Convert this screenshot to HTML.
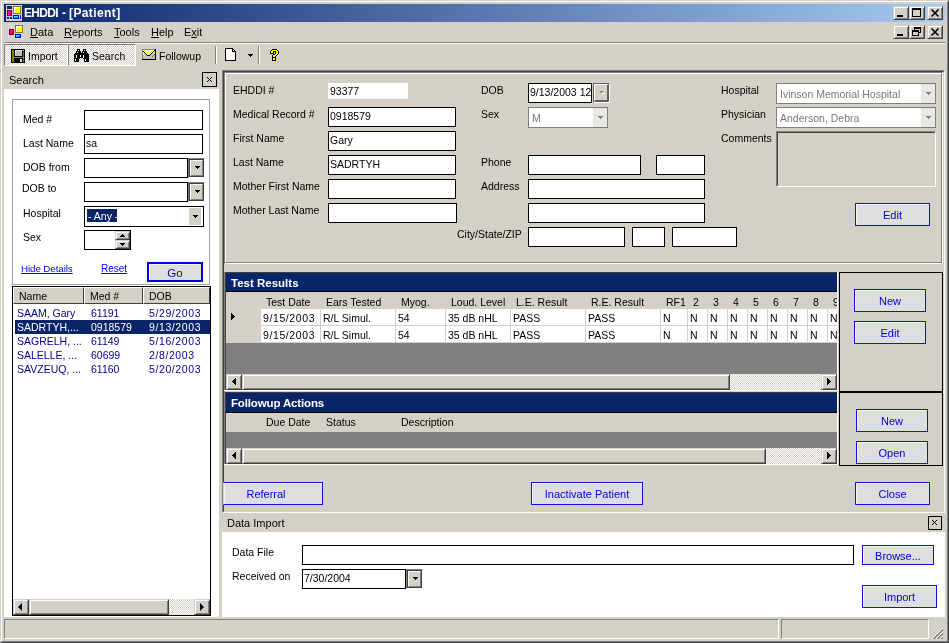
<!DOCTYPE html>
<html><head><meta charset="utf-8">
<style>
*{box-sizing:border-box;margin:0;padding:0}
html,body{width:949px;height:643px;overflow:hidden;background:#D4D0C8;font-family:"Liberation Sans",sans-serif;font-size:10.5px;color:#000}
.a{position:absolute}
.tb{position:absolute;background:#fff;border:1px solid #000}
.btn{position:absolute;padding-top:1px;background:#DEDEDE;border:1px solid #1010E0;box-shadow:inset 1px 1px 0 #F4F4F4;color:#0000D8;text-align:center;font-size:11px}
.lbl{position:absolute;height:12px;line-height:12px;white-space:nowrap}
.raised{border-style:solid;border-width:1px;border-color:#fff #404040 #404040 #fff;box-shadow:inset -1px -1px 0 #808080}
.sb{position:absolute;background:#D4D0C8;border:1px solid;border-color:#D4D0C8 #404040 #404040 #D4D0C8;box-shadow:inset 1px 1px 0 #fff,inset -1px -1px 0 #808080}
.dt{letter-spacing:.6px}
.dither{background-color:#fff;background-image:repeating-conic-gradient(#D4D0C8 0 25%,#fff 0 50%);background-size:2px 2px}
</style></head><body><div style="position:absolute;left:0;top:0;width:949px;height:643px;will-change:transform">
<!-- window frame -->
<div class="a" style="left:0;top:0;width:949px;height:643px;border:1px solid;border-color:#D4D0C8 #404040 #404040 #D4D0C8"></div>
<div class="a" style="left:1px;top:1px;width:947px;height:641px;border:1px solid;border-color:#fff #808080 #808080 #fff"></div>
<!-- title bar -->
<div class="a" style="left:4px;top:4px;width:941px;height:18px;background:linear-gradient(to right,#0A246A,#A6CAF0)"></div>
<div class="lbl" style="left:24px;top:5px;height:16px;line-height:16px;color:#fff;font-weight:bold;font-size:12px;letter-spacing:-0.7px">EHDDI</div><div class="lbl" style="left:62px;top:5px;height:16px;line-height:16px;color:#fff;font-weight:bold;font-size:12px">-</div><div class="lbl" style="left:69px;top:5px;height:16px;line-height:16px;color:#fff;font-weight:bold;font-size:12px;letter-spacing:0.4px">[Patient]</div>

<!-- title icon -->
<svg class="a" style="left:6px;top:5px" width="16" height="16" shape-rendering="crispEdges"><rect x="0" y="0" width="16" height="1" fill="#D0D0C8"/><rect x="0" y="1" width="1" height="1" fill="#D0D0C8"/><rect x="1" y="1" width="5" height="1" fill="#0A246A"/><rect x="6" y="1" width="1" height="1" fill="#D0D0C8"/><rect x="7" y="1" width="8" height="1" fill="#808000"/><rect x="15" y="1" width="1" height="1" fill="#D0D0C8"/><rect x="0" y="2" width="1" height="1" fill="#D0D0C8"/><rect x="1" y="2" width="5" height="1" fill="#0A246A"/><rect x="6" y="2" width="1" height="1" fill="#D0D0C8"/><rect x="7" y="2" width="1" height="1" fill="#808000"/><rect x="8" y="2" width="6" height="1" fill="#fff"/><rect x="14" y="2" width="1" height="1" fill="#808000"/><rect x="15" y="2" width="1" height="1" fill="#D0D0C8"/><rect x="0" y="3" width="1" height="1" fill="#D0D0C8"/><rect x="1" y="3" width="5" height="1" fill="#0A246A"/><rect x="6" y="3" width="1" height="1" fill="#D0D0C8"/><rect x="7" y="3" width="1" height="1" fill="#808000"/><rect x="8" y="3" width="1" height="1" fill="#fff"/><rect x="9" y="3" width="5" height="1" fill="#FFFF00"/><rect x="14" y="3" width="1" height="1" fill="#808000"/><rect x="15" y="3" width="1" height="1" fill="#D0D0C8"/><rect x="0" y="4" width="7" height="1" fill="#D0D0C8"/><rect x="7" y="4" width="1" height="1" fill="#808000"/><rect x="8" y="4" width="1" height="1" fill="#fff"/><rect x="9" y="4" width="5" height="1" fill="#FFFF00"/><rect x="14" y="4" width="1" height="1" fill="#808000"/><rect x="15" y="4" width="1" height="1" fill="#D0D0C8"/><rect x="0" y="5" width="1" height="1" fill="#D0D0C8"/><rect x="1" y="5" width="5" height="1" fill="#800000"/><rect x="6" y="5" width="1" height="1" fill="#D0D0C8"/><rect x="7" y="5" width="1" height="1" fill="#808000"/><rect x="8" y="5" width="1" height="1" fill="#fff"/><rect x="9" y="5" width="5" height="1" fill="#FFFF00"/><rect x="14" y="5" width="1" height="1" fill="#808000"/><rect x="15" y="5" width="1" height="1" fill="#D0D0C8"/><rect x="0" y="6" width="1" height="1" fill="#D0D0C8"/><rect x="1" y="6" width="1" height="1" fill="#800000"/><rect x="2" y="6" width="3" height="1" fill="#FF00FF"/><rect x="5" y="6" width="1" height="1" fill="#800000"/><rect x="6" y="6" width="1" height="1" fill="#D0D0C8"/><rect x="7" y="6" width="1" height="1" fill="#808000"/><rect x="8" y="6" width="1" height="1" fill="#fff"/><rect x="9" y="6" width="5" height="1" fill="#FFFF00"/><rect x="14" y="6" width="1" height="1" fill="#808000"/><rect x="15" y="6" width="1" height="1" fill="#D0D0C8"/><rect x="0" y="7" width="1" height="1" fill="#D0D0C8"/><rect x="1" y="7" width="1" height="1" fill="#800000"/><rect x="2" y="7" width="1" height="1" fill="#FF00FF"/><rect x="3" y="7" width="2" height="1" fill="#FF0000"/><rect x="5" y="7" width="1" height="1" fill="#800000"/><rect x="6" y="7" width="1" height="1" fill="#D0D0C8"/><rect x="7" y="7" width="1" height="1" fill="#808000"/><rect x="8" y="7" width="1" height="1" fill="#fff"/><rect x="9" y="7" width="5" height="1" fill="#FFFF00"/><rect x="14" y="7" width="1" height="1" fill="#808000"/><rect x="15" y="7" width="1" height="1" fill="#D0D0C8"/><rect x="0" y="8" width="1" height="1" fill="#D0D0C8"/><rect x="1" y="8" width="1" height="1" fill="#800000"/><rect x="2" y="8" width="1" height="1" fill="#FF00FF"/><rect x="3" y="8" width="2" height="1" fill="#FF0000"/><rect x="5" y="8" width="1" height="1" fill="#800000"/><rect x="6" y="8" width="1" height="1" fill="#D0D0C8"/><rect x="7" y="8" width="8" height="1" fill="#808000"/><rect x="15" y="8" width="1" height="1" fill="#D0D0C8"/><rect x="0" y="9" width="1" height="1" fill="#D0D0C8"/><rect x="1" y="9" width="1" height="1" fill="#800000"/><rect x="2" y="9" width="1" height="1" fill="#FF00FF"/><rect x="3" y="9" width="2" height="1" fill="#FF0000"/><rect x="5" y="9" width="1" height="1" fill="#800000"/><rect x="6" y="9" width="10" height="1" fill="#D0D0C8"/><rect x="0" y="10" width="1" height="1" fill="#D0D0C8"/><rect x="1" y="10" width="5" height="1" fill="#800000"/><rect x="6" y="10" width="1" height="1" fill="#D0D0C8"/><rect x="7" y="10" width="6" height="1" fill="#0000FF"/><rect x="13" y="10" width="1" height="1" fill="#D0D0C8"/><rect x="14" y="10" width="1" height="1" fill="#0A246A"/><rect x="15" y="10" width="1" height="1" fill="#D0D0C8"/><rect x="0" y="11" width="7" height="1" fill="#D0D0C8"/><rect x="7" y="11" width="1" height="1" fill="#0000FF"/><rect x="8" y="11" width="4" height="1" fill="#00FFFF"/><rect x="12" y="11" width="1" height="1" fill="#0000FF"/><rect x="13" y="11" width="1" height="1" fill="#D0D0C8"/><rect x="14" y="11" width="1" height="1" fill="#0A246A"/><rect x="15" y="11" width="1" height="1" fill="#D0D0C8"/><rect x="0" y="12" width="1" height="1" fill="#D0D0C8"/><rect x="1" y="12" width="2" height="1" fill="#0A246A"/><rect x="3" y="12" width="1" height="1" fill="#D0D0C8"/><rect x="4" y="12" width="2" height="1" fill="#0A246A"/><rect x="6" y="12" width="1" height="1" fill="#D0D0C8"/><rect x="7" y="12" width="1" height="1" fill="#0000FF"/><rect x="8" y="12" width="1" height="1" fill="#00FFFF"/><rect x="9" y="12" width="3" height="1" fill="#008080"/><rect x="12" y="12" width="1" height="1" fill="#0000FF"/><rect x="13" y="12" width="1" height="1" fill="#D0D0C8"/><rect x="14" y="12" width="1" height="1" fill="#0A246A"/><rect x="15" y="12" width="1" height="1" fill="#D0D0C8"/><rect x="0" y="13" width="1" height="1" fill="#D0D0C8"/><rect x="1" y="13" width="2" height="1" fill="#0A246A"/><rect x="3" y="13" width="1" height="1" fill="#D0D0C8"/><rect x="4" y="13" width="2" height="1" fill="#0A246A"/><rect x="6" y="13" width="1" height="1" fill="#D0D0C8"/><rect x="7" y="13" width="6" height="1" fill="#0000FF"/><rect x="13" y="13" width="1" height="1" fill="#D0D0C8"/><rect x="14" y="13" width="1" height="1" fill="#0A246A"/><rect x="15" y="13" width="1" height="1" fill="#D0D0C8"/><rect x="0" y="14" width="16" height="1" fill="#D0D0C8"/><rect x="0" y="15" width="16" height="1" fill="#D0D0C8"/></svg>
<!-- title buttons -->
<div class="sb" style="left:893px;top:6px;width:16px;height:14px"></div>
<div class="a" style="left:897px;top:15px;width:6px;height:2px;background:#000"></div>
<div class="sb" style="left:909px;top:6px;width:16px;height:14px"></div>
<div class="a" style="left:912px;top:8px;width:9px;height:9px;border:1px solid #000;border-top-width:2px"></div>
<div class="sb" style="left:927px;top:6px;width:16px;height:14px"></div>
<svg class="a" style="left:927px;top:6px" width="16" height="14"><path d="M4.5 3.5L11.5 10.5M11.5 3.5L4.5 10.5" stroke="#000" stroke-width="1.6"/></svg>

<!-- menu bar -->
<svg class="a" style="left:8px;top:24px" width="16" height="16" shape-rendering="crispEdges"><rect x="0" y="0" width="16" height="1" fill="#D8D6D0"/><rect x="0" y="1" width="1" height="1" fill="#D8D6D0"/><rect x="1" y="1" width="5" height="1" fill="#D8D6D0"/><rect x="6" y="1" width="1" height="1" fill="#D8D6D0"/><rect x="7" y="1" width="8" height="1" fill="#808000"/><rect x="15" y="1" width="1" height="1" fill="#D8D6D0"/><rect x="0" y="2" width="1" height="1" fill="#D8D6D0"/><rect x="1" y="2" width="5" height="1" fill="#D8D6D0"/><rect x="6" y="2" width="1" height="1" fill="#D8D6D0"/><rect x="7" y="2" width="1" height="1" fill="#808000"/><rect x="8" y="2" width="6" height="1" fill="#fff"/><rect x="14" y="2" width="1" height="1" fill="#808000"/><rect x="15" y="2" width="1" height="1" fill="#D8D6D0"/><rect x="0" y="3" width="1" height="1" fill="#D8D6D0"/><rect x="1" y="3" width="5" height="1" fill="#D8D6D0"/><rect x="6" y="3" width="1" height="1" fill="#D8D6D0"/><rect x="7" y="3" width="1" height="1" fill="#808000"/><rect x="8" y="3" width="1" height="1" fill="#fff"/><rect x="9" y="3" width="5" height="1" fill="#FFFF00"/><rect x="14" y="3" width="1" height="1" fill="#808000"/><rect x="15" y="3" width="1" height="1" fill="#D8D6D0"/><rect x="0" y="4" width="7" height="1" fill="#D8D6D0"/><rect x="7" y="4" width="1" height="1" fill="#808000"/><rect x="8" y="4" width="1" height="1" fill="#fff"/><rect x="9" y="4" width="5" height="1" fill="#FFFF00"/><rect x="14" y="4" width="1" height="1" fill="#808000"/><rect x="15" y="4" width="1" height="1" fill="#D8D6D0"/><rect x="0" y="5" width="1" height="1" fill="#D8D6D0"/><rect x="1" y="5" width="5" height="1" fill="#800000"/><rect x="6" y="5" width="1" height="1" fill="#D8D6D0"/><rect x="7" y="5" width="1" height="1" fill="#808000"/><rect x="8" y="5" width="1" height="1" fill="#fff"/><rect x="9" y="5" width="5" height="1" fill="#FFFF00"/><rect x="14" y="5" width="1" height="1" fill="#808000"/><rect x="15" y="5" width="1" height="1" fill="#D8D6D0"/><rect x="0" y="6" width="1" height="1" fill="#D8D6D0"/><rect x="1" y="6" width="1" height="1" fill="#800000"/><rect x="2" y="6" width="3" height="1" fill="#FF00FF"/><rect x="5" y="6" width="1" height="1" fill="#800000"/><rect x="6" y="6" width="1" height="1" fill="#D8D6D0"/><rect x="7" y="6" width="1" height="1" fill="#808000"/><rect x="8" y="6" width="1" height="1" fill="#fff"/><rect x="9" y="6" width="5" height="1" fill="#FFFF00"/><rect x="14" y="6" width="1" height="1" fill="#808000"/><rect x="15" y="6" width="1" height="1" fill="#D8D6D0"/><rect x="0" y="7" width="1" height="1" fill="#D8D6D0"/><rect x="1" y="7" width="1" height="1" fill="#800000"/><rect x="2" y="7" width="1" height="1" fill="#FF00FF"/><rect x="3" y="7" width="2" height="1" fill="#FF0000"/><rect x="5" y="7" width="1" height="1" fill="#800000"/><rect x="6" y="7" width="1" height="1" fill="#D8D6D0"/><rect x="7" y="7" width="1" height="1" fill="#808000"/><rect x="8" y="7" width="1" height="1" fill="#fff"/><rect x="9" y="7" width="5" height="1" fill="#FFFF00"/><rect x="14" y="7" width="1" height="1" fill="#808000"/><rect x="15" y="7" width="1" height="1" fill="#D8D6D0"/><rect x="0" y="8" width="1" height="1" fill="#D8D6D0"/><rect x="1" y="8" width="1" height="1" fill="#800000"/><rect x="2" y="8" width="1" height="1" fill="#FF00FF"/><rect x="3" y="8" width="2" height="1" fill="#FF0000"/><rect x="5" y="8" width="1" height="1" fill="#800000"/><rect x="6" y="8" width="1" height="1" fill="#D8D6D0"/><rect x="7" y="8" width="8" height="1" fill="#808000"/><rect x="15" y="8" width="1" height="1" fill="#D8D6D0"/><rect x="0" y="9" width="1" height="1" fill="#D8D6D0"/><rect x="1" y="9" width="1" height="1" fill="#800000"/><rect x="2" y="9" width="1" height="1" fill="#FF00FF"/><rect x="3" y="9" width="2" height="1" fill="#FF0000"/><rect x="5" y="9" width="1" height="1" fill="#800000"/><rect x="6" y="9" width="10" height="1" fill="#D8D6D0"/><rect x="0" y="10" width="1" height="1" fill="#D8D6D0"/><rect x="1" y="10" width="5" height="1" fill="#800000"/><rect x="6" y="10" width="1" height="1" fill="#D8D6D0"/><rect x="7" y="10" width="6" height="1" fill="#0000FF"/><rect x="13" y="10" width="1" height="1" fill="#D8D6D0"/><rect x="14" y="10" width="1" height="1" fill="#D8D6D0"/><rect x="15" y="10" width="1" height="1" fill="#D8D6D0"/><rect x="0" y="11" width="7" height="1" fill="#D8D6D0"/><rect x="7" y="11" width="1" height="1" fill="#0000FF"/><rect x="8" y="11" width="4" height="1" fill="#00FFFF"/><rect x="12" y="11" width="1" height="1" fill="#0000FF"/><rect x="13" y="11" width="1" height="1" fill="#D8D6D0"/><rect x="14" y="11" width="1" height="1" fill="#D8D6D0"/><rect x="15" y="11" width="1" height="1" fill="#D8D6D0"/><rect x="0" y="12" width="1" height="1" fill="#D8D6D0"/><rect x="1" y="12" width="2" height="1" fill="#D8D6D0"/><rect x="3" y="12" width="1" height="1" fill="#D8D6D0"/><rect x="4" y="12" width="2" height="1" fill="#D8D6D0"/><rect x="6" y="12" width="1" height="1" fill="#D8D6D0"/><rect x="7" y="12" width="1" height="1" fill="#0000FF"/><rect x="8" y="12" width="1" height="1" fill="#00FFFF"/><rect x="9" y="12" width="3" height="1" fill="#008080"/><rect x="12" y="12" width="1" height="1" fill="#0000FF"/><rect x="13" y="12" width="1" height="1" fill="#D8D6D0"/><rect x="14" y="12" width="1" height="1" fill="#D8D6D0"/><rect x="15" y="12" width="1" height="1" fill="#D8D6D0"/><rect x="0" y="13" width="1" height="1" fill="#D8D6D0"/><rect x="1" y="13" width="2" height="1" fill="#D8D6D0"/><rect x="3" y="13" width="1" height="1" fill="#D8D6D0"/><rect x="4" y="13" width="2" height="1" fill="#D8D6D0"/><rect x="6" y="13" width="1" height="1" fill="#D8D6D0"/><rect x="7" y="13" width="6" height="1" fill="#0000FF"/><rect x="13" y="13" width="1" height="1" fill="#D8D6D0"/><rect x="14" y="13" width="1" height="1" fill="#D8D6D0"/><rect x="15" y="13" width="1" height="1" fill="#D8D6D0"/><rect x="0" y="14" width="16" height="1" fill="#D8D6D0"/><rect x="0" y="15" width="16" height="1" fill="#D8D6D0"/></svg>
<div class="lbl" style="left:30px;top:26px;font-size:11px"><u>D</u>ata</div>
<div class="lbl" style="left:64px;top:26px;font-size:11px"><u>R</u>eports</div>
<div class="lbl" style="left:114px;top:26px;font-size:11px"><u>T</u>ools</div>
<div class="lbl" style="left:151px;top:26px;font-size:11px"><u>H</u>elp</div>
<div class="lbl" style="left:184px;top:26px;font-size:11px">E<u>x</u>it</div>
<div class="sb" style="left:893px;top:25px;width:16px;height:14px"></div>
<div class="a" style="left:897px;top:34px;width:6px;height:2px;background:#000"></div>
<div class="sb" style="left:909px;top:25px;width:16px;height:14px"></div>
<div class="a" style="left:914px;top:27px;width:7px;height:6px;border:1px solid #000;border-top-width:2px"></div>
<div class="a" style="left:912px;top:30px;width:7px;height:6px;border:1px solid #000;border-top-width:2px;background:#D4D0C8"></div>
<div class="sb" style="left:927px;top:25px;width:16px;height:14px"></div>
<svg class="a" style="left:927px;top:25px" width="16" height="14"><path d="M4.5 3.5L11.5 10.5M11.5 3.5L4.5 10.5" stroke="#000" stroke-width="1.6"/></svg>
<div class="a" style="left:4px;top:42px;width:941px;height:1px;background:#808080"></div>
<div class="a" style="left:4px;top:43px;width:941px;height:1px;background:#fff"></div>

<!-- toolbar -->
<div class="a dither" style="left:4px;top:44px;width:64px;height:22px;border:1px solid;border-color:#808080 #fff #fff #808080"></div>
<div class="a dither" style="left:68px;top:44px;width:68px;height:22px;border:1px solid;border-color:#808080 #fff #fff #808080"></div>
<svg class="a" style="left:11px;top:49px" width="14" height="14" shape-rendering="crispEdges"><rect x="0" y="0" width="14" height="1" fill="#000"/><rect x="0" y="1" width="1" height="1" fill="#000"/><rect x="1" y="1" width="2" height="1" fill="#808000"/><rect x="3" y="1" width="1" height="1" fill="#000"/><rect x="4" y="1" width="7" height="1" fill="#E0E0E0"/><rect x="11" y="1" width="1" height="1" fill="#000"/><rect x="12" y="1" width="1" height="1" fill="#fff"/><rect x="13" y="1" width="1" height="1" fill="#000"/><rect x="0" y="2" width="1" height="1" fill="#000"/><rect x="1" y="2" width="2" height="1" fill="#808000"/><rect x="3" y="2" width="1" height="1" fill="#000"/><rect x="4" y="2" width="1" height="1" fill="#E0E0E0"/><rect x="5" y="2" width="6" height="1" fill="#C0C0C0"/><rect x="11" y="2" width="3" height="1" fill="#000"/><rect x="0" y="3" width="1" height="1" fill="#000"/><rect x="1" y="3" width="2" height="1" fill="#808000"/><rect x="3" y="3" width="1" height="1" fill="#000"/><rect x="4" y="3" width="1" height="1" fill="#E0E0E0"/><rect x="5" y="3" width="6" height="1" fill="#C0C0C0"/><rect x="11" y="3" width="1" height="1" fill="#000"/><rect x="12" y="3" width="1" height="1" fill="#808000"/><rect x="13" y="3" width="1" height="1" fill="#000"/><rect x="0" y="4" width="1" height="1" fill="#000"/><rect x="1" y="4" width="2" height="1" fill="#808000"/><rect x="3" y="4" width="1" height="1" fill="#000"/><rect x="4" y="4" width="1" height="1" fill="#E0E0E0"/><rect x="5" y="4" width="6" height="1" fill="#C0C0C0"/><rect x="11" y="4" width="1" height="1" fill="#000"/><rect x="12" y="4" width="1" height="1" fill="#808000"/><rect x="13" y="4" width="1" height="1" fill="#000"/><rect x="0" y="5" width="1" height="1" fill="#000"/><rect x="1" y="5" width="2" height="1" fill="#808000"/><rect x="3" y="5" width="1" height="1" fill="#000"/><rect x="4" y="5" width="1" height="1" fill="#E0E0E0"/><rect x="5" y="5" width="6" height="1" fill="#C0C0C0"/><rect x="11" y="5" width="1" height="1" fill="#000"/><rect x="12" y="5" width="1" height="1" fill="#808000"/><rect x="13" y="5" width="1" height="1" fill="#000"/><rect x="0" y="6" width="1" height="1" fill="#000"/><rect x="1" y="6" width="2" height="1" fill="#808000"/><rect x="3" y="6" width="1" height="1" fill="#000"/><rect x="4" y="6" width="7" height="1" fill="#C0C0C0"/><rect x="11" y="6" width="1" height="1" fill="#000"/><rect x="12" y="6" width="1" height="1" fill="#808000"/><rect x="13" y="6" width="1" height="1" fill="#000"/><rect x="0" y="7" width="1" height="1" fill="#000"/><rect x="1" y="7" width="2" height="1" fill="#808000"/><rect x="3" y="7" width="9" height="1" fill="#000"/><rect x="12" y="7" width="1" height="1" fill="#808000"/><rect x="13" y="7" width="1" height="1" fill="#000"/><rect x="0" y="8" width="1" height="1" fill="#000"/><rect x="1" y="8" width="12" height="1" fill="#808000"/><rect x="13" y="8" width="1" height="1" fill="#000"/><rect x="0" y="9" width="1" height="1" fill="#000"/><rect x="1" y="9" width="2" height="1" fill="#808000"/><rect x="3" y="9" width="9" height="1" fill="#000"/><rect x="12" y="9" width="1" height="1" fill="#808000"/><rect x="13" y="9" width="1" height="1" fill="#000"/><rect x="0" y="10" width="1" height="1" fill="#000"/><rect x="1" y="10" width="2" height="1" fill="#808000"/><rect x="3" y="10" width="6" height="1" fill="#000"/><rect x="9" y="10" width="2" height="1" fill="#E0E0E0"/><rect x="11" y="10" width="1" height="1" fill="#000"/><rect x="12" y="10" width="1" height="1" fill="#808000"/><rect x="13" y="10" width="1" height="1" fill="#000"/><rect x="0" y="11" width="1" height="1" fill="#000"/><rect x="1" y="11" width="2" height="1" fill="#808000"/><rect x="3" y="11" width="6" height="1" fill="#000"/><rect x="9" y="11" width="2" height="1" fill="#E0E0E0"/><rect x="11" y="11" width="1" height="1" fill="#000"/><rect x="12" y="11" width="1" height="1" fill="#808000"/><rect x="13" y="11" width="1" height="1" fill="#000"/><rect x="0" y="12" width="1" height="1" fill="#000"/><rect x="1" y="12" width="2" height="1" fill="#808000"/><rect x="3" y="12" width="6" height="1" fill="#000"/><rect x="9" y="12" width="2" height="1" fill="#E0E0E0"/><rect x="11" y="12" width="1" height="1" fill="#000"/><rect x="12" y="12" width="1" height="1" fill="#808000"/><rect x="13" y="12" width="1" height="1" fill="#000"/><rect x="0" y="13" width="14" height="1" fill="#000"/></svg>
<div class="lbl" style="left:28px;top:50px">Import</div>
<svg class="a" style="left:74px;top:49px" width="15" height="13" shape-rendering="crispEdges"><rect x="3" y="0" width="3" height="1" fill="#000"/><rect x="9" y="0" width="3" height="1" fill="#000"/><rect x="3" y="1" width="1" height="1" fill="#000"/><rect x="4" y="1" width="1" height="1" fill="#fff"/><rect x="5" y="1" width="1" height="1" fill="#000"/><rect x="9" y="1" width="1" height="1" fill="#000"/><rect x="10" y="1" width="1" height="1" fill="#fff"/><rect x="11" y="1" width="1" height="1" fill="#000"/><rect x="2" y="2" width="5" height="1" fill="#000"/><rect x="8" y="2" width="5" height="1" fill="#000"/><rect x="2" y="3" width="1" height="1" fill="#000"/><rect x="3" y="3" width="1" height="1" fill="#fff"/><rect x="4" y="3" width="3" height="1" fill="#000"/><rect x="8" y="3" width="1" height="1" fill="#000"/><rect x="9" y="3" width="1" height="1" fill="#fff"/><rect x="10" y="3" width="3" height="1" fill="#000"/><rect x="1" y="4" width="13" height="1" fill="#000"/><rect x="0" y="5" width="15" height="1" fill="#000"/><rect x="0" y="6" width="2" height="1" fill="#000"/><rect x="2" y="6" width="1" height="1" fill="#fff"/><rect x="3" y="6" width="3" height="1" fill="#000"/><rect x="6" y="6" width="1" height="1" fill="#fff"/><rect x="7" y="6" width="2" height="1" fill="#000"/><rect x="9" y="6" width="1" height="1" fill="#fff"/><rect x="10" y="6" width="5" height="1" fill="#000"/><rect x="0" y="7" width="2" height="1" fill="#000"/><rect x="2" y="7" width="1" height="1" fill="#fff"/><rect x="3" y="7" width="3" height="1" fill="#000"/><rect x="6" y="7" width="1" height="1" fill="#fff"/><rect x="7" y="7" width="2" height="1" fill="#000"/><rect x="9" y="7" width="1" height="1" fill="#fff"/><rect x="10" y="7" width="5" height="1" fill="#000"/><rect x="0" y="8" width="2" height="1" fill="#000"/><rect x="2" y="8" width="1" height="1" fill="#fff"/><rect x="3" y="8" width="6" height="1" fill="#000"/><rect x="9" y="8" width="1" height="1" fill="#fff"/><rect x="10" y="8" width="5" height="1" fill="#000"/><rect x="0" y="9" width="6" height="1" fill="#000"/><rect x="9" y="9" width="6" height="1" fill="#000"/><rect x="0" y="10" width="1" height="1" fill="#000"/><rect x="1" y="10" width="1" height="1" fill="#fff"/><rect x="2" y="10" width="3" height="1" fill="#000"/><rect x="10" y="10" width="1" height="1" fill="#000"/><rect x="11" y="10" width="1" height="1" fill="#fff"/><rect x="12" y="10" width="3" height="1" fill="#000"/><rect x="0" y="11" width="1" height="1" fill="#000"/><rect x="1" y="11" width="1" height="1" fill="#fff"/><rect x="2" y="11" width="3" height="1" fill="#000"/><rect x="10" y="11" width="1" height="1" fill="#000"/><rect x="11" y="11" width="1" height="1" fill="#fff"/><rect x="12" y="11" width="3" height="1" fill="#000"/><rect x="0" y="12" width="5" height="1" fill="#000"/><rect x="10" y="12" width="5" height="1" fill="#000"/></svg>
<div class="lbl" style="left:92px;top:50px">Search</div>
<svg class="a" style="left:142px;top:49px" width="14" height="11" shape-rendering="crispEdges"><rect x="0" y="0" width="13" height="1" fill="#808080"/><rect x="13" y="0" width="1" height="1" fill="#000"/><rect x="0" y="1" width="1" height="1" fill="#808080"/><rect x="1" y="1" width="1" height="1" fill="#fff"/><rect x="2" y="1" width="1" height="1" fill="#FFFF00"/><rect x="3" y="1" width="2" height="1" fill="#fff"/><rect x="5" y="1" width="1" height="1" fill="#FFFF00"/><rect x="6" y="1" width="1" height="1" fill="#fff"/><rect x="7" y="1" width="1" height="1" fill="#FFFF00"/><rect x="8" y="1" width="2" height="1" fill="#fff"/><rect x="10" y="1" width="1" height="1" fill="#FFFF00"/><rect x="11" y="1" width="1" height="1" fill="#fff"/><rect x="12" y="1" width="2" height="1" fill="#000"/><rect x="0" y="2" width="1" height="1" fill="#808080"/><rect x="1" y="2" width="1" height="1" fill="#000"/><rect x="2" y="2" width="1" height="1" fill="#fff"/><rect x="3" y="2" width="1" height="1" fill="#FFFF00"/><rect x="4" y="2" width="2" height="1" fill="#fff"/><rect x="6" y="2" width="1" height="1" fill="#FFFF00"/><rect x="7" y="2" width="2" height="1" fill="#fff"/><rect x="9" y="2" width="1" height="1" fill="#FFFF00"/><rect x="10" y="2" width="1" height="1" fill="#fff"/><rect x="11" y="2" width="1" height="1" fill="#000"/><rect x="12" y="2" width="1" height="1" fill="#FFFF00"/><rect x="13" y="2" width="1" height="1" fill="#000"/><rect x="0" y="3" width="1" height="1" fill="#808080"/><rect x="1" y="3" width="1" height="1" fill="#FFFF00"/><rect x="2" y="3" width="1" height="1" fill="#000"/><rect x="3" y="3" width="1" height="1" fill="#fff"/><rect x="4" y="3" width="1" height="1" fill="#FFFF00"/><rect x="5" y="3" width="1" height="1" fill="#fff"/><rect x="6" y="3" width="1" height="1" fill="#FFFF00"/><rect x="7" y="3" width="1" height="1" fill="#fff"/><rect x="8" y="3" width="1" height="1" fill="#FFFF00"/><rect x="9" y="3" width="1" height="1" fill="#fff"/><rect x="10" y="3" width="1" height="1" fill="#000"/><rect x="11" y="3" width="1" height="1" fill="#fff"/><rect x="12" y="3" width="1" height="1" fill="#C0C0C0"/><rect x="13" y="3" width="1" height="1" fill="#000"/><rect x="0" y="4" width="1" height="1" fill="#808080"/><rect x="1" y="4" width="1" height="1" fill="#fff"/><rect x="2" y="4" width="1" height="1" fill="#FFFF00"/><rect x="3" y="4" width="1" height="1" fill="#000"/><rect x="4" y="4" width="1" height="1" fill="#fff"/><rect x="5" y="4" width="1" height="1" fill="#FFFF00"/><rect x="6" y="4" width="1" height="1" fill="#fff"/><rect x="7" y="4" width="1" height="1" fill="#FFFF00"/><rect x="8" y="4" width="1" height="1" fill="#fff"/><rect x="9" y="4" width="1" height="1" fill="#000"/><rect x="10" y="4" width="1" height="1" fill="#FFFF00"/><rect x="11" y="4" width="2" height="1" fill="#C0C0C0"/><rect x="13" y="4" width="1" height="1" fill="#000"/><rect x="0" y="5" width="1" height="1" fill="#808080"/><rect x="1" y="5" width="1" height="1" fill="#FFFF00"/><rect x="2" y="5" width="2" height="1" fill="#C0C0C0"/><rect x="4" y="5" width="1" height="1" fill="#000"/><rect x="5" y="5" width="1" height="1" fill="#FFFF00"/><rect x="6" y="5" width="1" height="1" fill="#fff"/><rect x="7" y="5" width="1" height="1" fill="#FFFF00"/><rect x="8" y="5" width="1" height="1" fill="#000"/><rect x="9" y="5" width="3" height="1" fill="#C0C0C0"/><rect x="12" y="5" width="1" height="1" fill="#808000"/><rect x="13" y="5" width="1" height="1" fill="#000"/><rect x="0" y="6" width="1" height="1" fill="#808080"/><rect x="1" y="6" width="1" height="1" fill="#C0C0C0"/><rect x="2" y="6" width="1" height="1" fill="#FFFF00"/><rect x="3" y="6" width="2" height="1" fill="#C0C0C0"/><rect x="5" y="6" width="3" height="1" fill="#000"/><rect x="8" y="6" width="3" height="1" fill="#C0C0C0"/><rect x="11" y="6" width="1" height="1" fill="#808000"/><rect x="12" y="6" width="1" height="1" fill="#C0C0C0"/><rect x="13" y="6" width="1" height="1" fill="#000"/><rect x="0" y="7" width="1" height="1" fill="#808080"/><rect x="1" y="7" width="2" height="1" fill="#C0C0C0"/><rect x="3" y="7" width="1" height="1" fill="#FFFF00"/><rect x="4" y="7" width="6" height="1" fill="#C0C0C0"/><rect x="10" y="7" width="1" height="1" fill="#808000"/><rect x="11" y="7" width="2" height="1" fill="#C0C0C0"/><rect x="13" y="7" width="1" height="1" fill="#000"/><rect x="0" y="8" width="1" height="1" fill="#808080"/><rect x="1" y="8" width="12" height="1" fill="#C0C0C0"/><rect x="13" y="8" width="1" height="1" fill="#000"/><rect x="0" y="9" width="1" height="1" fill="#808080"/><rect x="1" y="9" width="12" height="1" fill="#C0C0C0"/><rect x="13" y="9" width="1" height="1" fill="#000"/><rect x="0" y="10" width="14" height="1" fill="#000"/></svg>
<div class="lbl" style="left:159px;top:50px">Followup</div>
<div class="a" style="left:215px;top:46px;width:1px;height:18px;background:#808080"></div>
<div class="a" style="left:216px;top:46px;width:1px;height:18px;background:#fff"></div>
<svg class="a" style="left:225px;top:48px" width="12" height="13" shape-rendering="crispEdges"><rect x="0" y="0" width="8" height="1" fill="#000"/><rect x="0" y="1" width="1" height="1" fill="#000"/><rect x="1" y="1" width="6" height="1" fill="#fff"/><rect x="7" y="1" width="2" height="1" fill="#000"/><rect x="0" y="2" width="1" height="1" fill="#000"/><rect x="1" y="2" width="6" height="1" fill="#fff"/><rect x="7" y="2" width="1" height="1" fill="#000"/><rect x="8" y="2" width="1" height="1" fill="#fff"/><rect x="9" y="2" width="1" height="1" fill="#000"/><rect x="0" y="3" width="1" height="1" fill="#000"/><rect x="1" y="3" width="6" height="1" fill="#fff"/><rect x="7" y="3" width="4" height="1" fill="#000"/><rect x="0" y="4" width="1" height="1" fill="#000"/><rect x="1" y="4" width="9" height="1" fill="#fff"/><rect x="10" y="4" width="1" height="1" fill="#000"/><rect x="0" y="5" width="1" height="1" fill="#000"/><rect x="1" y="5" width="9" height="1" fill="#fff"/><rect x="10" y="5" width="1" height="1" fill="#000"/><rect x="0" y="6" width="1" height="1" fill="#000"/><rect x="1" y="6" width="9" height="1" fill="#fff"/><rect x="10" y="6" width="1" height="1" fill="#000"/><rect x="0" y="7" width="1" height="1" fill="#000"/><rect x="1" y="7" width="9" height="1" fill="#fff"/><rect x="10" y="7" width="1" height="1" fill="#000"/><rect x="0" y="8" width="1" height="1" fill="#000"/><rect x="1" y="8" width="9" height="1" fill="#fff"/><rect x="10" y="8" width="1" height="1" fill="#000"/><rect x="0" y="9" width="1" height="1" fill="#000"/><rect x="1" y="9" width="9" height="1" fill="#fff"/><rect x="10" y="9" width="1" height="1" fill="#000"/><rect x="0" y="10" width="1" height="1" fill="#000"/><rect x="1" y="10" width="9" height="1" fill="#fff"/><rect x="10" y="10" width="1" height="1" fill="#000"/><rect x="0" y="11" width="1" height="1" fill="#000"/><rect x="1" y="11" width="9" height="1" fill="#fff"/><rect x="10" y="11" width="1" height="1" fill="#000"/><rect x="0" y="12" width="11" height="1" fill="#000"/></svg>
<svg class="a" style="left:248px;top:54px" width="5" height="3" shape-rendering="crispEdges"><rect x="0" y="0" width="5" height="1"/><rect x="1" y="1" width="3" height="1"/><rect x="2" y="2" width="1" height="1"/></svg>
<div class="a" style="left:258px;top:46px;width:1px;height:18px;background:#808080"></div>
<div class="a" style="left:259px;top:46px;width:1px;height:18px;background:#fff"></div>
<svg class="a" style="left:269px;top:49px" width="11" height="12" shape-rendering="crispEdges"><rect x="3" y="0" width="5" height="1" fill="#000"/><rect x="2" y="1" width="1" height="1" fill="#000"/><rect x="3" y="1" width="5" height="1" fill="#FFFF00"/><rect x="8" y="1" width="1" height="1" fill="#000"/><rect x="1" y="2" width="1" height="1" fill="#000"/><rect x="2" y="2" width="2" height="1" fill="#FFFF00"/><rect x="4" y="2" width="3" height="1" fill="#000"/><rect x="7" y="2" width="2" height="1" fill="#FFFF00"/><rect x="9" y="2" width="1" height="1" fill="#000"/><rect x="1" y="3" width="1" height="1" fill="#000"/><rect x="2" y="3" width="2" height="1" fill="#FFFF00"/><rect x="4" y="3" width="1" height="1" fill="#000"/><rect x="6" y="3" width="1" height="1" fill="#000"/><rect x="7" y="3" width="2" height="1" fill="#FFFF00"/><rect x="9" y="3" width="1" height="1" fill="#000"/><rect x="1" y="4" width="4" height="1" fill="#000"/><rect x="6" y="4" width="1" height="1" fill="#000"/><rect x="7" y="4" width="2" height="1" fill="#FFFF00"/><rect x="9" y="4" width="1" height="1" fill="#000"/><rect x="4" y="5" width="2" height="1" fill="#000"/><rect x="6" y="5" width="2" height="1" fill="#FFFF00"/><rect x="8" y="5" width="1" height="1" fill="#000"/><rect x="3" y="6" width="1" height="1" fill="#000"/><rect x="4" y="6" width="3" height="1" fill="#FFFF00"/><rect x="7" y="6" width="1" height="1" fill="#000"/><rect x="3" y="7" width="1" height="1" fill="#000"/><rect x="4" y="7" width="2" height="1" fill="#FFFF00"/><rect x="6" y="7" width="1" height="1" fill="#000"/><rect x="3" y="8" width="4" height="1" fill="#000"/><rect x="3" y="9" width="1" height="1" fill="#000"/><rect x="4" y="9" width="2" height="1" fill="#FFFF00"/><rect x="6" y="9" width="1" height="1" fill="#000"/><rect x="3" y="10" width="1" height="1" fill="#000"/><rect x="4" y="10" width="2" height="1" fill="#FFFF00"/><rect x="6" y="10" width="1" height="1" fill="#000"/><rect x="3" y="11" width="4" height="1" fill="#000"/></svg>

<!-- search panel -->
<div class="lbl" style="left:9px;top:74px;font-size:11px">Search</div>
<div class="a" style="left:202px;top:72px;width:15px;height:15px;border:1px solid #000"></div>
<svg class="a" style="left:202px;top:72px" width="15" height="15" shape-rendering="crispEdges"><path d="M5 5h1v1h1v1h1v-1h1v-1h1v1h-1v1h-1v1h1v1h1v1h-1v-1h-1v-1h-1v1h-1v1h-1v-1h1v-1h1v-1h-1v-1h-1z" fill="#000"/></svg>
<div class="a" style="left:4px;top:89px;width:215px;height:528px;background:#fff"></div>
<div class="a" style="left:12px;top:99px;width:198px;height:186px;border:1px solid #A0A0A0"></div>
<div class="lbl" style="left:23px;top:113px">Med #</div>
<div class="tb" style="left:84px;top:110px;width:119px;height:20px"></div>
<div class="lbl" style="left:23px;top:137px">Last Name</div>
<div class="tb" style="left:84px;top:134px;width:119px;height:20px"><div class="lbl" style="left:1px;top:2px">sa</div></div>
<div class="lbl" style="left:23px;top:161px">DOB from</div>
<div class="tb" style="left:84px;top:158px;width:104px;height:20px"></div>
<div class="a" style="left:188px;top:158px;width:17px;height:20px;border:1px solid;border-color:#808080 #fff #fff #808080;background:#D4D0C8"><div class="a" style="left:0;top:0;width:15px;height:18px;border:1px solid #404040"><div class="a" style="left:0;top:0;width:13px;height:16px;border:1px solid;border-color:#fff #808080 #808080 #fff"></div></div><svg class="a" style="left:6px;top:7px" width="5" height="3" shape-rendering="crispEdges"><rect x="0" y="0" width="5" height="1"/><rect x="1" y="1" width="3" height="1"/><rect x="2" y="2" width="1" height="1"/></svg></div>
<div class="lbl" style="left:22px;top:182px">DOB to</div>
<div class="tb" style="left:84px;top:182px;width:104px;height:20px"></div>
<div class="a" style="left:188px;top:182px;width:17px;height:20px;border:1px solid;border-color:#808080 #fff #fff #808080;background:#D4D0C8"><div class="a" style="left:0;top:0;width:15px;height:18px;border:1px solid #404040"><div class="a" style="left:0;top:0;width:13px;height:16px;border:1px solid;border-color:#fff #808080 #808080 #fff"></div></div><svg class="a" style="left:6px;top:7px" width="5" height="3" shape-rendering="crispEdges"><rect x="0" y="0" width="5" height="1"/><rect x="1" y="1" width="3" height="1"/><rect x="2" y="2" width="1" height="1"/></svg></div>
<div class="lbl" style="left:23px;top:207px">Hospital</div>
<div class="tb" style="left:84px;top:206px;width:120px;height:21px"><div class="a" style="left:2px;top:2px;width:30px;height:13px;background:#0A246A"></div><div class="lbl" style="left:3px;top:3px;color:#fff">- Any -</div>
<div class="a" style="left:104px;top:1px;width:12px;height:17px;background:#D4D0C8"></div><svg class="a" style="left:108px;top:8px" width="5" height="3" shape-rendering="crispEdges"><rect x="0" y="0" width="5" height="1"/><rect x="1" y="1" width="3" height="1"/><rect x="2" y="2" width="1" height="1"/></svg></div>
<div class="lbl" style="left:23px;top:231px">Sex</div>
<div class="tb" style="left:84px;top:230px;width:47px;height:20px"></div>
<div class="sb" style="left:115px;top:231px;width:15px;height:9px"></div>
<svg class="a" style="left:120px;top:234px" width="5" height="3" shape-rendering="crispEdges"><rect x="2" y="0" width="1" height="1"/><rect x="1" y="1" width="3" height="1"/><rect x="0" y="2" width="5" height="1"/></svg>
<div class="sb" style="left:115px;top:240px;width:15px;height:9px"></div>
<svg class="a" style="left:120px;top:243px" width="5" height="3" shape-rendering="crispEdges"><rect x="0" y="0" width="5" height="1"/><rect x="1" y="1" width="3" height="1"/><rect x="2" y="2" width="1" height="1"/></svg>
<div class="lbl" style="left:21px;top:263px;color:#0000FF;text-decoration:underline;font-size:9.8px;letter-spacing:-.1px">Hide Details</div>
<div class="lbl" style="left:101px;top:263px;color:#0000FF;text-decoration:underline;font-size:10px">Reset</div>
<div class="btn" style="left:147px;top:262px;width:56px;height:20px;border:2px solid #0000E0;line-height:16px;font-size:11.5px;color:#0000B8">Go</div>

<!-- list -->
<div class="a" style="left:12px;top:286px;width:199px;height:330px;border:1px solid #000;background:#fff"></div>
<div class="a" style="left:13px;top:287px;width:71px;height:17px;background:#D4D0C8;border:1px solid;border-color:#fff #404040 #404040 #fff"><div class="lbl" style="left:5px;top:2px">Name</div></div>
<div class="a" style="left:84px;top:287px;width:59px;height:17px;background:#D4D0C8;border:1px solid;border-color:#fff #404040 #404040 #fff"><div class="lbl" style="left:5px;top:2px">Med #</div></div>
<div class="a" style="left:143px;top:287px;width:67px;height:17px;background:#D4D0C8;border:1px solid;border-color:#fff #404040 #404040 #fff"><div class="lbl" style="left:5px;top:2px">DOB</div></div>
<div class="a" style="left:15px;top:320px;width:195px;height:14px;background:#0A246A"></div>
<div class="lbl" style="left:17px;top:307px;color:#000090">SAAM, Gary</div>
<div class="lbl" style="left:91px;top:307px;color:#000090">61191</div>
<div class="lbl" style="left:149px;top:307px;color:#000090"><span class="dt">5/29/2003</span></div>
<div class="lbl" style="left:17px;top:321px;color:#fff">SADRTYH,...</div>
<div class="lbl" style="left:91px;top:321px;color:#fff">0918579</div>
<div class="lbl" style="left:149px;top:321px;color:#fff"><span class="dt">9/13/2003</span></div>
<div class="lbl" style="left:17px;top:335px;color:#000090">SAGRELH, ...</div>
<div class="lbl" style="left:91px;top:335px;color:#000090">61149</div>
<div class="lbl" style="left:149px;top:335px;color:#000090"><span class="dt">5/16/2003</span></div>
<div class="lbl" style="left:17px;top:349px;color:#000090">SALELLE, ...</div>
<div class="lbl" style="left:91px;top:349px;color:#000090">60699</div>
<div class="lbl" style="left:149px;top:349px;color:#000090"><span class="dt">2/8/2003</span></div>
<div class="lbl" style="left:17px;top:363px;color:#000090">SAVZEUQ, ...</div>
<div class="lbl" style="left:91px;top:363px;color:#000090">61160</div>
<div class="lbl" style="left:149px;top:363px;color:#000090"><span class="dt">5/20/2003</span></div>
<!-- list hscroll -->
<div class="a" style="left:13px;top:599px;width:197px;height:16px;background:#D4D0C8"></div>
<div class="sb" style="left:13px;top:599px;width:16px;height:16px"></div>
<svg class="a" style="left:18px;top:603px" width="5" height="8"><path d="M4 0V8L0 4Z" fill="#000"/></svg>
<div class="sb" style="left:29px;top:599px;width:140px;height:16px"></div>
<div class="a dither" style="left:169px;top:599px;width:25px;height:16px"></div>
<div class="sb" style="left:194px;top:599px;width:16px;height:16px"></div>
<svg class="a" style="left:200px;top:603px" width="5" height="8"><path d="M0 0V8L4 4Z" fill="#000"/></svg>

<!-- status bar -->
<div class="a" style="left:4px;top:619px;width:775px;height:20px;border:1px solid;border-color:#808080 #fff #fff #808080"></div>
<div class="a" style="left:781px;top:619px;width:148px;height:20px;border:1px solid;border-color:#808080 #fff #fff #808080"></div>
<svg class="a" style="left:931px;top:627px" width="13" height="13"><path d="M12 1L1 12M12 5L5 12M12 9L9 12" stroke="#fff" stroke-width="1"/><path d="M12 2L2 12M12 3L3 12M12 6L6 12M12 7L7 12M12 10L10 12M12 11L11 12" stroke="#808080" stroke-width="1"/></svg>

<!-- MDI client frame -->
<div class="a" style="left:222px;top:70px;width:723px;height:443px;border:1px solid;border-color:#808080 #fff #fff #808080"></div>
<div class="a" style="left:223px;top:71px;width:721px;height:441px;border:1px solid;border-color:#404040 #D4D0C8 #D4D0C8 #404040"></div>
<!-- top form panel -->
<div class="a" style="left:224px;top:72px;width:719px;height:192px;border:1px solid;border-color:#808080 #fff #fff #808080"></div>
<div class="a" style="left:225px;top:73px;width:717px;height:190px;border:1px solid;border-color:#fff #808080 #808080 #fff"></div>
<div class="lbl" style="left:233px;top:84px">EHDDI #</div>
<div class="a" style="left:328px;top:83px;width:80px;height:16px;background:#fff"><div class="lbl" style="left:2px;top:2px">93377</div></div>
<div class="lbl" style="left:233px;top:108px">Medical Record #</div>
<div class="tb" style="left:328px;top:107px;width:128px;height:20px"><div class="lbl" style="left:1px;top:2px">0918579</div></div>
<div class="lbl" style="left:233px;top:132px">First Name</div>
<div class="tb" style="left:328px;top:131px;width:128px;height:20px"><div class="lbl" style="left:1px;top:2px">Gary</div></div>
<div class="lbl" style="left:233px;top:156px">Last Name</div>
<div class="tb" style="left:328px;top:155px;width:128px;height:20px"><div class="lbl" style="left:1px;top:2px">SADRTYH</div></div>
<div class="lbl" style="left:233px;top:180px">Mother First Name</div>
<div class="tb" style="left:328px;top:179px;width:128px;height:20px"></div>
<div class="lbl" style="left:233px;top:204px">Mother Last Name</div>
<div class="tb" style="left:328px;top:203px;width:129px;height:20px"></div>

<div class="lbl" style="left:481px;top:84px">DOB</div>
<div class="tb" style="left:528px;top:83px;width:64px;height:20px;overflow:hidden"><div class="lbl" style="left:1px;top:2px">9/13/2003 12:00</div></div>
<div class="a" style="left:593px;top:83px;width:17px;height:20px;border:1px solid;border-color:#606060 #fff #fff #606060;background:#D4D0C8"><div class="a" style="left:0;top:0;width:15px;height:18px;border-style:solid;border-width:1px 2px 2px 1px;border-color:#fff #606060 #606060 #fff"></div><svg class="a" style="left:5px;top:7px" width="8" height="5"><path d="M1 1H6L3.5 3.5Z" fill="#fff"/><path d="M0 0H5L2.5 2.5Z" fill="#808080"/></svg></div>
<div class="lbl" style="left:481px;top:108px">Sex</div>
<div class="a" style="left:528px;top:107px;width:80px;height:21px;border:1px solid #808080;background:#fff"><div class="lbl" style="left:3px;top:4px;color:#787878">M</div><div class="a" style="left:64px;top:0;width:14px;height:19px;background:#E9E7E3"></div><svg class="a" style="left:69px;top:8px" width="5" height="3" shape-rendering="crispEdges"><rect x="0" y="0" width="5" height="1" fill="#808080"/><rect x="1" y="1" width="3" height="1" fill="#808080"/><rect x="2" y="2" width="1" height="1" fill="#808080"/></svg></div>
<div class="lbl" style="left:481px;top:156px">Phone</div>
<div class="tb" style="left:528px;top:155px;width:113px;height:20px"></div>
<div class="tb" style="left:656px;top:155px;width:49px;height:20px"></div>
<div class="lbl" style="left:481px;top:180px">Address</div>
<div class="tb" style="left:528px;top:179px;width:177px;height:20px"></div>
<div class="tb" style="left:528px;top:203px;width:177px;height:20px"></div>
<div class="lbl" style="left:457px;top:228px">City/State/ZIP</div>
<div class="tb" style="left:528px;top:227px;width:97px;height:20px"></div>
<div class="tb" style="left:632px;top:227px;width:33px;height:20px"></div>
<div class="tb" style="left:672px;top:227px;width:65px;height:20px"></div>

<div class="lbl" style="left:721px;top:84px">Hospital</div>
<div class="a" style="left:776px;top:83px;width:160px;height:21px;border:1px solid #808080;background:#fff"><div class="lbl" style="left:3px;top:4px;color:#787878">Ivinson Memorial Hospital</div><div class="a" style="left:144px;top:0;width:14px;height:19px;background:#E9E7E3"></div><svg class="a" style="left:149px;top:8px" width="5" height="3" shape-rendering="crispEdges"><rect x="0" y="0" width="5" height="1" fill="#808080"/><rect x="1" y="1" width="3" height="1" fill="#808080"/><rect x="2" y="2" width="1" height="1" fill="#808080"/></svg></div>
<div class="lbl" style="left:721px;top:108px">Physician</div>
<div class="a" style="left:776px;top:107px;width:160px;height:21px;border:1px solid #808080;background:#fff"><div class="lbl" style="left:3px;top:4px;color:#787878">Anderson, Debra</div><div class="a" style="left:144px;top:0;width:14px;height:19px;background:#E9E7E3"></div><svg class="a" style="left:149px;top:8px" width="5" height="3" shape-rendering="crispEdges"><rect x="0" y="0" width="5" height="1" fill="#808080"/><rect x="1" y="1" width="3" height="1" fill="#808080"/><rect x="2" y="2" width="1" height="1" fill="#808080"/></svg></div>
<div class="lbl" style="left:721px;top:132px">Comments</div>
<div class="a" style="left:776px;top:131px;width:160px;height:56px;border:1px solid;border-color:#808080 #fff #fff #808080"><div class="a" style="left:0;top:0;width:158px;height:54px;border:1px solid;border-color:#404040 #D4D0C8 #D4D0C8 #404040"></div></div>
<div class="btn" style="left:855px;top:203px;width:75px;height:23px;line-height:21px">Edit</div>

<!-- test results panel -->
<div class="a" style="left:224px;top:272px;width:1px;height:120px;background:#808080"></div>
<div class="a" style="left:225px;top:272px;width:1px;height:118px;background:#404040"></div>
<div class="a" style="left:225px;top:272px;width:612px;height:1px;background:#404040"></div>
<div class="a" style="left:837px;top:272px;width:1px;height:119px;background:#fff"></div>
<div class="a" style="left:224px;top:390px;width:614px;height:1px;background:#fff"></div>
<div class="a" style="left:226px;top:273px;width:611px;height:117px;overflow:hidden;background:#D4D0C8">
<div class="a" style="left:0;top:0;width:611px;height:19px;background:#0A246A;border-bottom:1px solid #000"><div class="lbl" style="left:5px;top:4px;color:#fff;font-weight:bold;font-size:11.5px">Test Results</div></div>
<div class="lbl" style="left:40px;top:23px">Test Date</div><div class="lbl" style="left:100px;top:23px">Ears Tested</div><div class="lbl" style="left:175px;top:23px">Myog.</div><div class="lbl" style="left:225px;top:23px">Loud. Level</div><div class="lbl" style="left:290px;top:23px">L.E. Result</div><div class="lbl" style="left:365px;top:23px">R.E. Result</div><div class="lbl" style="left:440px;top:23px">RF1</div><div class="lbl" style="left:467px;top:23px">2</div><div class="lbl" style="left:487px;top:23px">3</div><div class="lbl" style="left:507px;top:23px">4</div><div class="lbl" style="left:527px;top:23px">5</div><div class="lbl" style="left:547px;top:23px">6</div><div class="lbl" style="left:567px;top:23px">7</div><div class="lbl" style="left:587px;top:23px">8</div><div class="lbl" style="left:607px;top:23px">9</div>
<div class="a" style="left:35px;top:36px;width:60px;height:17px;background:#fff;border-right:1px solid #D4D0C8;border-bottom:1px solid #D4D0C8"><div class="lbl" style="left:2px;top:3px"><span class="dt">9/15/2003</span></div></div><div class="a" style="left:35px;top:53px;width:60px;height:17px;background:#fff;border-right:1px solid #D4D0C8;border-bottom:1px solid #D4D0C8"><div class="lbl" style="left:2px;top:3px"><span class="dt">9/15/2003</span></div></div><div class="a" style="left:95px;top:36px;width:75px;height:17px;background:#fff;border-right:1px solid #D4D0C8;border-bottom:1px solid #D4D0C8"><div class="lbl" style="left:2px;top:3px">R/L Simul.</div></div><div class="a" style="left:95px;top:53px;width:75px;height:17px;background:#fff;border-right:1px solid #D4D0C8;border-bottom:1px solid #D4D0C8"><div class="lbl" style="left:2px;top:3px">R/L Simul.</div></div><div class="a" style="left:170px;top:36px;width:50px;height:17px;background:#fff;border-right:1px solid #D4D0C8;border-bottom:1px solid #D4D0C8"><div class="lbl" style="left:2px;top:3px">54</div></div><div class="a" style="left:170px;top:53px;width:50px;height:17px;background:#fff;border-right:1px solid #D4D0C8;border-bottom:1px solid #D4D0C8"><div class="lbl" style="left:2px;top:3px">54</div></div><div class="a" style="left:220px;top:36px;width:65px;height:17px;background:#fff;border-right:1px solid #D4D0C8;border-bottom:1px solid #D4D0C8"><div class="lbl" style="left:2px;top:3px">35 dB nHL</div></div><div class="a" style="left:220px;top:53px;width:65px;height:17px;background:#fff;border-right:1px solid #D4D0C8;border-bottom:1px solid #D4D0C8"><div class="lbl" style="left:2px;top:3px">35 dB nHL</div></div><div class="a" style="left:285px;top:36px;width:75px;height:17px;background:#fff;border-right:1px solid #D4D0C8;border-bottom:1px solid #D4D0C8"><div class="lbl" style="left:2px;top:3px">PASS</div></div><div class="a" style="left:285px;top:53px;width:75px;height:17px;background:#fff;border-right:1px solid #D4D0C8;border-bottom:1px solid #D4D0C8"><div class="lbl" style="left:2px;top:3px">PASS</div></div><div class="a" style="left:360px;top:36px;width:75px;height:17px;background:#fff;border-right:1px solid #D4D0C8;border-bottom:1px solid #D4D0C8"><div class="lbl" style="left:2px;top:3px">PASS</div></div><div class="a" style="left:360px;top:53px;width:75px;height:17px;background:#fff;border-right:1px solid #D4D0C8;border-bottom:1px solid #D4D0C8"><div class="lbl" style="left:2px;top:3px">PASS</div></div><div class="a" style="left:435px;top:36px;width:27px;height:17px;background:#fff;border-right:1px solid #D4D0C8;border-bottom:1px solid #D4D0C8"><div class="lbl" style="left:2px;top:3px">N</div></div><div class="a" style="left:435px;top:53px;width:27px;height:17px;background:#fff;border-right:1px solid #D4D0C8;border-bottom:1px solid #D4D0C8"><div class="lbl" style="left:2px;top:3px">N</div></div><div class="a" style="left:462px;top:36px;width:20px;height:17px;background:#fff;border-right:1px solid #D4D0C8;border-bottom:1px solid #D4D0C8"><div class="lbl" style="left:2px;top:3px">N</div></div><div class="a" style="left:462px;top:53px;width:20px;height:17px;background:#fff;border-right:1px solid #D4D0C8;border-bottom:1px solid #D4D0C8"><div class="lbl" style="left:2px;top:3px">N</div></div><div class="a" style="left:482px;top:36px;width:20px;height:17px;background:#fff;border-right:1px solid #D4D0C8;border-bottom:1px solid #D4D0C8"><div class="lbl" style="left:2px;top:3px">N</div></div><div class="a" style="left:482px;top:53px;width:20px;height:17px;background:#fff;border-right:1px solid #D4D0C8;border-bottom:1px solid #D4D0C8"><div class="lbl" style="left:2px;top:3px">N</div></div><div class="a" style="left:502px;top:36px;width:20px;height:17px;background:#fff;border-right:1px solid #D4D0C8;border-bottom:1px solid #D4D0C8"><div class="lbl" style="left:2px;top:3px">N</div></div><div class="a" style="left:502px;top:53px;width:20px;height:17px;background:#fff;border-right:1px solid #D4D0C8;border-bottom:1px solid #D4D0C8"><div class="lbl" style="left:2px;top:3px">N</div></div><div class="a" style="left:522px;top:36px;width:20px;height:17px;background:#fff;border-right:1px solid #D4D0C8;border-bottom:1px solid #D4D0C8"><div class="lbl" style="left:2px;top:3px">N</div></div><div class="a" style="left:522px;top:53px;width:20px;height:17px;background:#fff;border-right:1px solid #D4D0C8;border-bottom:1px solid #D4D0C8"><div class="lbl" style="left:2px;top:3px">N</div></div><div class="a" style="left:542px;top:36px;width:20px;height:17px;background:#fff;border-right:1px solid #D4D0C8;border-bottom:1px solid #D4D0C8"><div class="lbl" style="left:2px;top:3px">N</div></div><div class="a" style="left:542px;top:53px;width:20px;height:17px;background:#fff;border-right:1px solid #D4D0C8;border-bottom:1px solid #D4D0C8"><div class="lbl" style="left:2px;top:3px">N</div></div><div class="a" style="left:562px;top:36px;width:20px;height:17px;background:#fff;border-right:1px solid #D4D0C8;border-bottom:1px solid #D4D0C8"><div class="lbl" style="left:2px;top:3px">N</div></div><div class="a" style="left:562px;top:53px;width:20px;height:17px;background:#fff;border-right:1px solid #D4D0C8;border-bottom:1px solid #D4D0C8"><div class="lbl" style="left:2px;top:3px">N</div></div><div class="a" style="left:582px;top:36px;width:20px;height:17px;background:#fff;border-right:1px solid #D4D0C8;border-bottom:1px solid #D4D0C8"><div class="lbl" style="left:2px;top:3px">N</div></div><div class="a" style="left:582px;top:53px;width:20px;height:17px;background:#fff;border-right:1px solid #D4D0C8;border-bottom:1px solid #D4D0C8"><div class="lbl" style="left:2px;top:3px">N</div></div><div class="a" style="left:602px;top:36px;width:22px;height:17px;background:#fff;border-right:1px solid #D4D0C8;border-bottom:1px solid #D4D0C8"><div class="lbl" style="left:2px;top:3px">N</div></div><div class="a" style="left:602px;top:53px;width:22px;height:17px;background:#fff;border-right:1px solid #D4D0C8;border-bottom:1px solid #D4D0C8"><div class="lbl" style="left:2px;top:3px">N</div></div>
<svg class="a" style="left:5px;top:40px" width="4" height="7" shape-rendering="crispEdges"><rect x="0" y="0" width="1" height="7"/><rect x="1" y="1" width="1" height="5"/><rect x="2" y="2" width="1" height="3"/><rect x="3" y="3" width="1" height="1"/></svg>
<div class="a" style="left:0;top:70px;width:611px;height:31px;background:#808080"></div>
<div class="a" style="left:0;top:101px;width:611px;height:16px;background:#D4D0C8"></div>
<div class="sb" style="left:0;top:101px;width:16px;height:16px"></div>
<svg class="a" style="left:6px;top:105px" width="4" height="7" shape-rendering="crispEdges"><rect x="3" y="0" width="1" height="7"/><rect x="2" y="1" width="1" height="5"/><rect x="1" y="2" width="1" height="3"/><rect x="0" y="3" width="1" height="1"/></svg>
<div class="sb" style="left:16px;top:101px;width:488px;height:16px"></div>
<div class="a dither" style="left:504px;top:101px;width:91px;height:16px"></div>
<div class="sb" style="left:595px;top:101px;width:16px;height:16px"></div>
<svg class="a" style="left:601px;top:105px" width="4" height="7" shape-rendering="crispEdges"><rect x="0" y="0" width="1" height="7"/><rect x="1" y="1" width="1" height="5"/><rect x="2" y="2" width="1" height="3"/><rect x="3" y="3" width="1" height="1"/></svg>

</div>
<div class="a" style="left:839px;top:272px;width:104px;height:120px;border:1px solid #000"></div>
<div class="btn" style="left:854px;top:289px;width:72px;height:23px;line-height:21px">New</div>
<div class="btn" style="left:854px;top:321px;width:72px;height:23px;line-height:21px">Edit</div>

<!-- followup panel -->
<div class="a" style="left:224px;top:392px;width:1px;height:73px;background:#808080"></div>
<div class="a" style="left:225px;top:392px;width:1px;height:72px;background:#404040"></div>
<div class="a" style="left:225px;top:392px;width:612px;height:1px;background:#404040"></div>
<div class="a" style="left:837px;top:392px;width:1px;height:73px;background:#fff"></div>
<div class="a" style="left:224px;top:464px;width:614px;height:1px;background:#fff"></div>
<div class="a" style="left:226px;top:393px;width:611px;height:71px;overflow:hidden;background:#D4D0C8">
<div class="a" style="left:0;top:0;width:611px;height:20px;background:#0A246A;border-bottom:1px solid #000"><div class="lbl" style="left:5px;top:4px;color:#fff;font-weight:bold;font-size:11.5px;letter-spacing:-0.15px">Followup Actions</div></div>
<div class="lbl" style="left:40px;top:23px">Due Date</div>
<div class="lbl" style="left:100px;top:23px">Status</div>
<div class="lbl" style="left:175px;top:23px">Description</div>
<div class="a" style="left:0;top:39px;width:611px;height:16px;background:#808080"></div>
<div class="a" style="left:0;top:55px;width:611px;height:16px;background:#D4D0C8"></div>
<div class="sb" style="left:0;top:55px;width:16px;height:16px"></div>
<svg class="a" style="left:6px;top:59px" width="4" height="7" shape-rendering="crispEdges"><rect x="3" y="0" width="1" height="7"/><rect x="2" y="1" width="1" height="5"/><rect x="1" y="2" width="1" height="3"/><rect x="0" y="3" width="1" height="1"/></svg>
<div class="sb" style="left:16px;top:55px;width:524px;height:16px"></div>
<div class="a dither" style="left:540px;top:55px;width:55px;height:16px"></div>
<div class="sb" style="left:595px;top:55px;width:16px;height:16px"></div>
<svg class="a" style="left:601px;top:59px" width="4" height="7" shape-rendering="crispEdges"><rect x="0" y="0" width="1" height="7"/><rect x="1" y="1" width="1" height="5"/><rect x="2" y="2" width="1" height="3"/><rect x="3" y="3" width="1" height="1"/></svg>

</div>
<div class="a" style="left:839px;top:392px;width:104px;height:74px;border:1px solid #000"></div>
<div class="btn" style="left:856px;top:409px;width:72px;height:23px;line-height:21px">New</div>
<div class="btn" style="left:856px;top:441px;width:72px;height:23px;line-height:21px">Open</div>

<!-- bottom buttons -->
<div class="btn" style="left:223px;top:482px;width:100px;height:23px;line-height:21px;border-left-color:#D4D0C8;padding-right:14px">Referral</div>
<div class="btn" style="left:531px;top:482px;width:112px;height:23px;line-height:21px">Inactivate Patient</div>
<div class="btn" style="left:855px;top:482px;width:75px;height:23px;line-height:21px">Close</div>

<!-- data import -->
<div class="lbl" style="left:227px;top:517px;font-size:11px">Data Import</div>
<div class="a" style="left:928px;top:516px;width:14px;height:14px;border:1px solid #000"></div>
<svg class="a" style="left:928px;top:516px" width="14" height="14" shape-rendering="crispEdges"><path d="M4 4h1v1h1v1h1v-1h1v-1h1v1h-1v1h-1v1h1v1h1v1h-1v-1h-1v-1h-1v1h-1v1h-1v-1h1v-1h1v-1h-1v-1h-1z" fill="#000"/></svg>
<div class="a" style="left:222px;top:532px;width:723px;height:85px;background:#fff"></div>
<div class="lbl" style="left:232px;top:546px">Data File</div>
<div class="tb" style="left:302px;top:545px;width:552px;height:20px"></div>
<div class="btn" style="left:862px;top:545px;width:72px;height:20px;line-height:18px">Browse...</div>
<div class="lbl" style="left:232px;top:570px">Received on</div>
<div class="tb" style="left:302px;top:569px;width:104px;height:20px"><div class="lbl" style="left:1px;top:2px">7/30/2004</div></div>
<div class="a" style="left:406px;top:569px;width:17px;height:20px;border:1px solid;border-color:#808080 #fff #fff #808080;background:#D4D0C8"><div class="a" style="left:0;top:0;width:15px;height:18px;border:1px solid #404040"><div class="a" style="left:0;top:0;width:13px;height:16px;border:1px solid;border-color:#fff #808080 #808080 #fff"></div></div><svg class="a" style="left:6px;top:7px" width="5" height="3" shape-rendering="crispEdges"><rect x="0" y="0" width="5" height="1"/><rect x="1" y="1" width="3" height="1"/><rect x="2" y="2" width="1" height="1"/></svg></div>
<div class="btn" style="left:862px;top:585px;width:75px;height:23px;line-height:21px">Import</div>
</div></body></html>
